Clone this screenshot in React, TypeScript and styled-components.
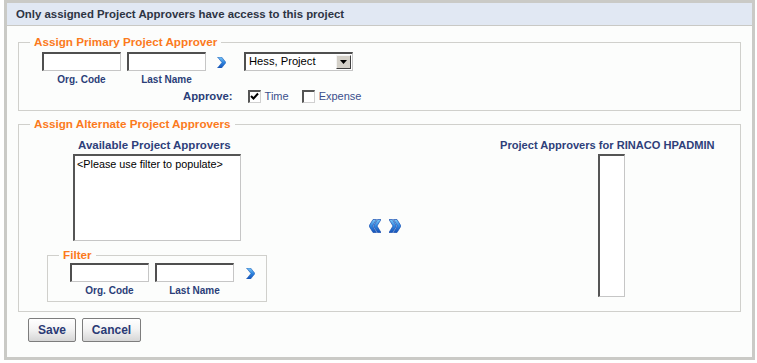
import React from "react";
import styled, { createGlobalStyle } from "styled-components";

const Global = createGlobalStyle`
  html, body { margin: 0; padding: 0; background: #ffffff; }
  body { font-family: "Liberation Sans", Arial, sans-serif; }
`;

const Panel = styled.div`
  width: 745px;
  height: 354px;
  margin-left: 4px;
  border: 3px solid #cacac6;
  background: #fcfdfc;
  display: flex;
  flex-direction: column;
`;

const Header = styled.div`
  height: 22px;
  line-height: 22px;
  background: #e1e8f3;
  border-bottom: 1px solid #c9c9c5;
  padding-left: 9px;
  font-size: 11.4px;
  font-weight: bold;
  color: #2d3443;
`;

const Body = styled.div`
  padding: 8px 11px 0 11px;
  display: flex;
  flex-direction: column;
`;

const FieldSet = styled.fieldset<{ $mt?: number }>`
  margin: ${(p) => p.$mt ?? 0}px 0 0 0;
  padding: 0;
  border: 1px solid #d0d0cc;
  min-width: 0;
`;

const Legend = styled.legend`
  margin-left: 11px;
  padding: 0 4px;
  font-size: 11.7px;
  line-height: 16px;
  font-weight: bold;
  color: #fb7a1d;
`;

const Row = styled.div<{ $pl: number; $gap?: number; $mt?: number }>`
  display: flex;
  align-items: flex-start;
  padding-left: ${(p) => p.$pl}px;
  margin-top: ${(p) => p.$mt ?? 0}px;
  gap: ${(p) => p.$gap ?? 0}px;
`;

const FieldGroup = styled.div`
  display: flex;
  flex-direction: column;
  align-items: center;
  width: 79px;
`;

const TextInput = styled.input`
  box-sizing: border-box;
  width: 79px;
  height: 19px;
  margin: 0;
  padding: 0 2px;
  background: #fff;
  border-style: solid;
  border-width: 2px 1px 1px 2px;
  border-color: #4f4f4f #c6c6c6 #c6c6c6 #4f4f4f;
  font-family: "Liberation Sans", Arial, sans-serif;
  font-size: 11px;
`;

const FieldLabel = styled.div`
  margin-top: 3px;
  font-size: 10px;
  line-height: 12px;
  font-weight: bold;
  color: #2b3e78;
  white-space: nowrap;
`;

const ArrowBtn = styled.span<{ $ml: number; $mt: number }>`
  display: inline-flex;
  margin-left: ${(p) => p.$ml}px;
  margin-top: ${(p) => p.$mt}px;
  cursor: pointer;
`;

const SelectBox = styled.div`
  box-sizing: border-box;
  margin-left: 12px;
  width: 109px;
  height: 19px;
  display: flex;
  align-items: stretch;
  background: #fff;
  border-style: solid;
  border-width: 2px 1px 1px 2px;
  border-color: #4f4f4f #c6c6c6 #c6c6c6 #4f4f4f;
`;

const SelectText = styled.div`
  flex: 1;
  padding-left: 3px;
  font-size: 11.2px;
  line-height: 15px;
  color: #000;
`;

const DropBtn = styled.div`
  box-sizing: border-box;
  width: 15px;
  margin: 1px;
  background: #d4d0c8;
  border-style: solid;
  border-width: 1px;
  border-color: #f4f4f4 #404040 #404040 #f4f4f4;
  display: flex;
  align-items: center;
  justify-content: center;
`;

const ApproveRow = styled.div`
  display: flex;
  align-items: center;
  padding-left: 164px;
  margin-top: 3px;
  margin-bottom: 7px;
  height: 14px;
`;

const ApproveLabel = styled.span`
  font-size: 11.3px;
  font-weight: bold;
  color: #2b3e78;
  margin-right: 15px;
`;

const Check = styled.span`
  box-sizing: border-box;
  width: 13px;
  height: 13px;
  background: #fff;
  border-style: solid;
  border-width: 2px 1px 1px 2px;
  border-color: #555 #d0d0d0 #d0d0d0 #555;
  display: inline-flex;
  align-items: center;
  justify-content: center;
`;

const CheckText = styled.span<{ $mr?: number }>`
  font-size: 11px;
  color: #3b4f8c;
  margin-left: 4px;
  margin-right: ${(p) => p.$mr ?? 0}px;
`;

const AltGrid = styled.div`
  display: grid;
  grid-template-columns: 220px 1fr 216px;
  padding: 6px 24px 9px 28px;
`;

const Column = styled.div`
  display: flex;
  flex-direction: column;
`;

const ColTitle = styled.div<{ $pl: number; $fs: number }>`
  padding-left: ${(p) => p.$pl}px;
  font-size: ${(p) => p.$fs}px;
  line-height: 14px;
  font-weight: bold;
  color: #2e3f7a;
  white-space: nowrap;
`;

const ListBox = styled.div<{ $w: number; $h: number; $ml: number }>`
  box-sizing: border-box;
  width: ${(p) => p.$w}px;
  height: ${(p) => p.$h}px;
  margin-left: ${(p) => p.$ml}px;
  margin-top: 2px;
  background: #fff;
  border-style: solid;
  border-width: 2px 1px 1px 2px;
  border-color: #555 #c6c6c6 #c6c6c6 #555;
  padding: 2px 2px;
  font-size: 10.8px;
  line-height: 13px;
  color: #000;
`;

const Middle = styled.div`
  display: flex;
  justify-content: center;
  align-items: flex-start;
  padding-top: 81px;
  padding-left: 2px;
  gap: 8px;
`;

const FilterSet = styled(FieldSet)`
  margin-top: 6px;
  width: 220px;
  box-sizing: border-box;
`;

const FilterInner = styled.div`
  display: flex;
  align-items: flex-start;
  padding-left: 22px;
  padding-bottom: 4px;
  gap: 6px;
`;

const ButtonRow = styled.div`
  display: flex;
  gap: 6px;
  padding-left: 10px;
  margin-top: 6px;
`;

const Button = styled.button<{ $w: number }>`
  box-sizing: border-box;
  width: ${(p) => p.$w}px;
  height: 24px;
  margin: 0;
  padding: 0;
  border: 1px solid #7d7d7d;
  border-radius: 2px;
  background: linear-gradient(#ffffff 0%, #f4f4f4 45%, #d6d6d6 100%);
  font-family: "Liberation Sans", Arial, sans-serif;
  font-size: 12px;
  font-weight: bold;
  color: #2a3a75;
`;

const Grad: React.FC<{ id: string }> = ({ id }) => (
  <defs>
    <linearGradient id={id} x1="0" y1="0" x2="0" y2="1">
      <stop offset="0" stopColor="#7cc8f7" />
      <stop offset="0.5" stopColor="#2f86e0" />
      <stop offset="1" stopColor="#1553b8" />
    </linearGradient>
  </defs>
);

const Chevron: React.FC<{ id: string }> = ({ id }) => (
  <svg width={9} height={11} viewBox="0 0 9 11">
    <Grad id={id} />
    <path d="M0.5 0 L4.5 0 L9 5.5 L4.5 11 L0.5 11 L5 5.5 Z" fill={`url(#${id})`} stroke="#1a57b5" strokeWidth="0.6" />
  </svg>
);

const DoubleChevron: React.FC<{ id: string; left?: boolean }> = ({ id, left }) => (
  <svg width={12} height={14} viewBox="0 0 12 14" style={{ transform: left ? "scaleX(-1)" : undefined }}>
    <Grad id={id} />
    <path
      d="M0 0.5 L3.5 0.5 L7.5 7 L3.5 13.5 L0 13.5 L4 7 Z M4.5 0.5 L8 0.5 L12 7 L8 13.5 L4.5 13.5 L8.5 7 Z"
      fill={`url(#${id})`}
      stroke="#1a4fb0"
      strokeWidth="0.7"
      strokeLinejoin="round"
    />
  </svg>
);

const CheckMark = () => (
  <svg width="9" height="9" viewBox="0 0 9 9">
    <path d="M1 4 L3.5 6.5 L8 1.5" fill="none" stroke="#000" strokeWidth="2" />
  </svg>
);

export default function App() {
  return (
    <>
      <Global />
      <Panel>
        <Header>Only assigned Project Approvers have access to this project</Header>
        <Body>
          <FieldSet>
            <Legend>Assign Primary Project Approver</Legend>
            <Row $pl={23} $gap={6} $mt={2}>
              <FieldGroup>
                <TextInput />
                <FieldLabel>Org. Code</FieldLabel>
              </FieldGroup>
              <FieldGroup>
                <TextInput />
                <FieldLabel>Last Name</FieldLabel>
              </FieldGroup>
              <ArrowBtn $ml={5} $mt={5}>
                <Chevron id="g1" />
              </ArrowBtn>
              <SelectBox>
                <SelectText>Hess, Project</SelectText>
                <DropBtn>
                  <svg width="7" height="4" viewBox="0 0 7 4">
                    <path d="M0 0 L7 0 L3.5 4 Z" fill="#000" />
                  </svg>
                </DropBtn>
              </SelectBox>
            </Row>
            <ApproveRow>
              <ApproveLabel>Approve:</ApproveLabel>
              <Check>
                <CheckMark />
              </Check>
              <CheckText $mr={13}>Time</CheckText>
              <Check />
              <CheckText>Expense</CheckText>
            </ApproveRow>
          </FieldSet>

          <FieldSet $mt={5}>
            <Legend>Assign Alternate Project Approvers</Legend>
            <AltGrid>
              <Column>
                <ColTitle $pl={31} $fs={11.5}>
                  Available Project Approvers
                </ColTitle>
                <ListBox $w={168} $h={87} $ml={26}>
                  &lt;Please use filter to populate&gt;
                </ListBox>
                <FilterSet>
                  <Legend>Filter</Legend>
                  <FilterInner>
                    <FieldGroup>
                      <TextInput />
                      <FieldLabel>Org. Code</FieldLabel>
                    </FieldGroup>
                    <FieldGroup>
                      <TextInput />
                      <FieldLabel>Last Name</FieldLabel>
                    </FieldGroup>
                    <ArrowBtn $ml={6} $mt={5}>
                      <Chevron id="g2" />
                    </ArrowBtn>
                  </FilterInner>
                </FilterSet>
              </Column>
              <Middle>
                <DoubleChevron id="g3" left />
                <DoubleChevron id="g4" />
              </Middle>
              <Column>
                <ColTitle $pl={0} $fs={11.1}>
                  Project Approvers for RINACO HPADMIN
                </ColTitle>
                <ListBox $w={27} $h={143} $ml={98} />
              </Column>
            </AltGrid>
          </FieldSet>

          <ButtonRow>
            <Button $w={48}>Save</Button>
            <Button $w={59}>Cancel</Button>
          </ButtonRow>
        </Body>
      </Panel>
    </>
  );
}
